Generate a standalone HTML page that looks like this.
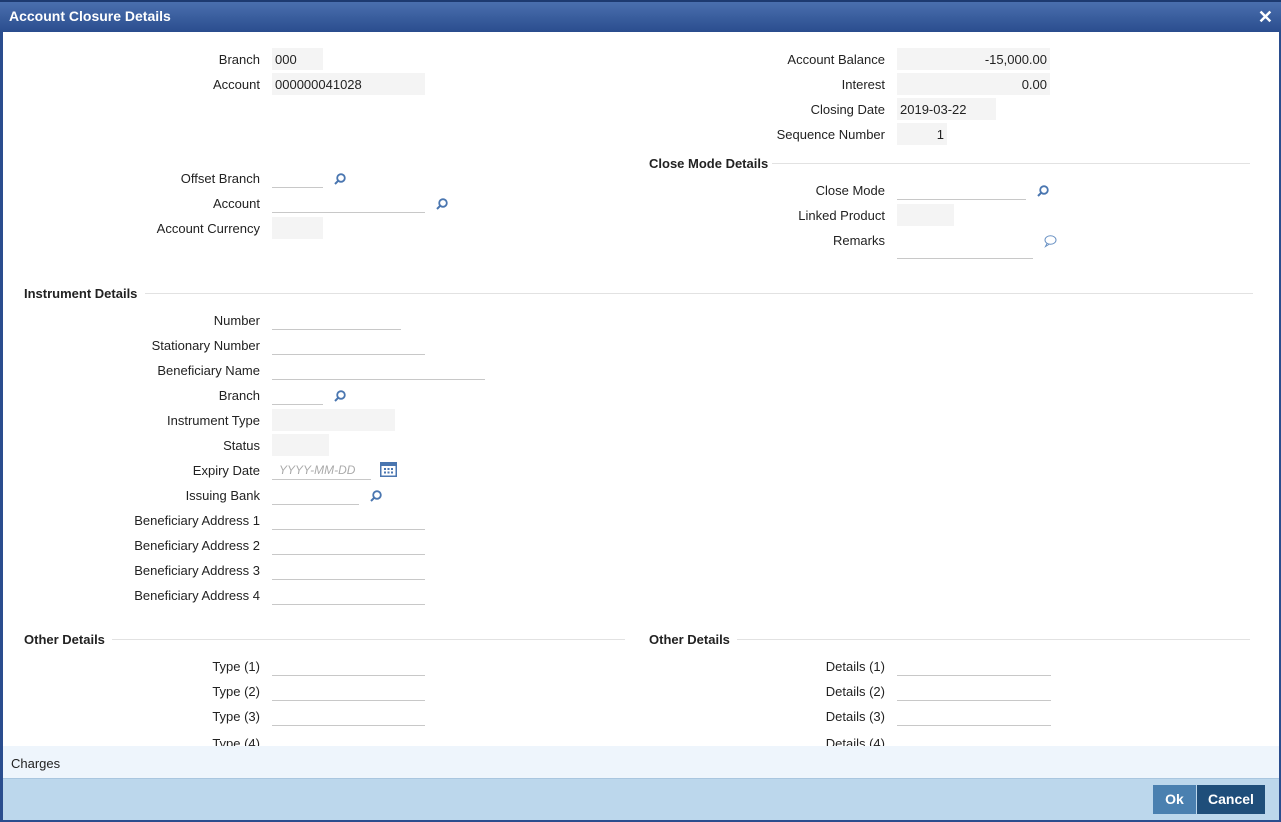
<!DOCTYPE html>
<html><head><meta charset="utf-8"><style>
*{margin:0;padding:0;box-sizing:border-box}
body{width:1281px;height:822px;overflow:hidden;background:#fff;font-family:"Liberation Sans",Arial,sans-serif;font-size:13px;color:#222;position:relative}
#title{position:absolute;left:0;top:0;width:1281px;height:32px;background:linear-gradient(#4a6fae,#2a4d8e);border-top:2px solid #1d3a70;color:#fff;font-size:14px;font-weight:bold;padding:6px 0 0 9px}
#x{position:absolute;right:8px;top:5px;font-size:18px;font-weight:bold}
#lb{position:absolute;left:0;top:32px;width:3px;height:790px;background:#2a4d8e}
#rb{position:absolute;right:0;top:32px;width:2px;height:790px;background:#2a4d8e}
#content{position:absolute;left:3px;top:32px;width:1276px;height:714px;overflow:hidden}
.l{position:absolute;text-align:right;width:250px;line-height:16px}
.f{position:absolute;height:22px;line-height:24px;padding:0 3px}
.g{background:#f4f4f4}
.u{border-bottom:1px solid #c8c8c8}
.h{position:absolute;font-weight:bold;line-height:16px}
.ln{position:absolute;height:1px;background:#e2e2e2}
.ic{position:absolute;width:14px;height:14px}
#charges{position:absolute;left:3px;top:746px;width:1276px;height:32px;background:#eef5fc;padding:10px 0 0 8px}
#bot{position:absolute;left:3px;top:778px;width:1276px;height:42px;background:#bcd7ec;border-top:1px solid #a9c6df}
#bbot{position:absolute;left:0;top:820px;width:1281px;height:2px;background:#2a4d8e}
.btn{position:absolute;top:6px;height:29px;color:#fff;font-weight:bold;font-size:14px;text-align:center;line-height:29px}
</style></head><body>
<div id="title">Account Closure Details<span id="x">✕</span></div>
<div id="lb"></div><div id="rb"></div>
<div id="content">
<div style="position:absolute;left:-3px;top:-31px;width:1281px;height:800px">

<div class="l" style="left:10px;top:51px">Branch</div><div class="f g" style="left:272px;top:47px;width:51px">000</div>
<div class="l" style="left:10px;top:76px">Account</div><div class="f g" style="left:272px;top:72px;width:153px">000000041028</div>

<div class="l" style="left:635px;top:51px">Account Balance</div><div class="f g" style="left:897px;top:47px;width:153px;text-align:right">-15,000.00</div>
<div class="l" style="left:635px;top:76px">Interest</div><div class="f g" style="left:897px;top:72px;width:153px;text-align:right">0.00</div>
<div class="l" style="left:635px;top:101px">Closing Date</div><div class="f g" style="left:897px;top:97px;width:99px">2019-03-22</div>
<div class="l" style="left:635px;top:126px">Sequence Number</div><div class="f g" style="left:897px;top:122px;width:50px;text-align:right">1</div>

<div class="h" style="left:649px;top:155px">Close Mode Details</div><div class="ln" style="left:772px;top:162px;width:478px"></div>

<div class="l" style="left:10px;top:170px">Offset Branch</div><div class="f u" style="left:272px;top:165px;width:51px"></div>
<div class="l" style="left:10px;top:195px">Account</div><div class="f u" style="left:272px;top:190px;width:153px"></div>
<div class="l" style="left:10px;top:220px">Account Currency</div><div class="f g" style="left:272px;top:216px;width:51px"></div>

<div class="l" style="left:635px;top:182px">Close Mode</div><div class="f u" style="left:897px;top:177px;width:129px"></div>
<div class="l" style="left:635px;top:207px">Linked Product</div><div class="f g" style="left:897px;top:203px;width:57px"></div>
<div class="l" style="left:635px;top:232px">Remarks</div><div class="f u" style="left:897px;top:227px;width:136px;height:31px"></div>

<div class="h" style="left:24px;top:285px">Instrument Details</div><div class="ln" style="left:145px;top:292px;width:1108px"></div>

<div class="l" style="left:10px;top:312px">Number</div><div class="f u" style="left:272px;top:307px;width:129px"></div>
<div class="l" style="left:10px;top:337px">Stationary Number</div><div class="f u" style="left:272px;top:332px;width:153px"></div>
<div class="l" style="left:10px;top:362px">Beneficiary Name</div><div class="f u" style="left:272px;top:357px;width:213px"></div>
<div class="l" style="left:10px;top:387px">Branch</div><div class="f u" style="left:272px;top:382px;width:51px"></div>
<div class="l" style="left:10px;top:412px">Instrument Type</div><div class="f g" style="left:272px;top:408px;width:123px"></div>
<div class="l" style="left:10px;top:437px">Status</div><div class="f g" style="left:272px;top:433px;width:57px"></div>
<div class="l" style="left:10px;top:462px">Expiry Date</div><div class="f u" style="left:272px;top:457px;width:99px;color:#aaa;font-style:italic;font-size:12px;padding-left:7px">YYYY-MM-DD</div>
<div class="l" style="left:10px;top:487px">Issuing Bank</div><div class="f u" style="left:272px;top:482px;width:87px"></div>
<div class="l" style="left:10px;top:512px">Beneficiary Address 1</div><div class="f u" style="left:272px;top:507px;width:153px"></div>
<div class="l" style="left:10px;top:537px">Beneficiary Address 2</div><div class="f u" style="left:272px;top:532px;width:153px"></div>
<div class="l" style="left:10px;top:562px">Beneficiary Address 3</div><div class="f u" style="left:272px;top:557px;width:153px"></div>
<div class="l" style="left:10px;top:587px">Beneficiary Address 4</div><div class="f u" style="left:272px;top:582px;width:153px"></div>

<div class="h" style="left:24px;top:631px">Other Details</div><div class="ln" style="left:112px;top:638px;width:513px"></div>
<div class="h" style="left:649px;top:631px">Other Details</div><div class="ln" style="left:737px;top:638px;width:513px"></div>

<div class="l" style="left:10px;top:658px">Type (1)</div><div class="f u" style="left:272px;top:653px;width:153px"></div>
<div class="l" style="left:10px;top:683px">Type (2)</div><div class="f u" style="left:272px;top:678px;width:153px"></div>
<div class="l" style="left:10px;top:708px">Type (3)</div><div class="f u" style="left:272px;top:703px;width:153px"></div>
<div class="l" style="left:10px;top:735px">Type (4)</div><div class="f u" style="left:272px;top:728px;width:153px"></div>
<div class="l" style="left:635px;top:658px">Details (1)</div><div class="f u" style="left:897px;top:653px;width:154px"></div>
<div class="l" style="left:635px;top:683px">Details (2)</div><div class="f u" style="left:897px;top:678px;width:154px"></div>
<div class="l" style="left:635px;top:708px">Details (3)</div><div class="f u" style="left:897px;top:703px;width:154px"></div>
<div class="l" style="left:635px;top:735px">Details (4)</div><div class="f u" style="left:897px;top:728px;width:154px"></div>

<svg class="ic" style="left:333px;top:171px" viewBox="0 0 14 14"><circle cx="8" cy="6" r="3.8" fill="none" stroke="#4a76b0" stroke-width="1.8"/><line x1="5.3" y1="8.7" x2="2" y2="12" stroke="#4a76b0" stroke-width="2"/></svg>
<svg class="ic" style="left:435px;top:196px" viewBox="0 0 14 14"><circle cx="8" cy="6" r="3.8" fill="none" stroke="#4a76b0" stroke-width="1.8"/><line x1="5.3" y1="8.7" x2="2" y2="12" stroke="#4a76b0" stroke-width="2"/></svg>
<svg class="ic" style="left:1036px;top:183px" viewBox="0 0 14 14"><circle cx="8" cy="6" r="3.8" fill="none" stroke="#4a76b0" stroke-width="1.8"/><line x1="5.3" y1="8.7" x2="2" y2="12" stroke="#4a76b0" stroke-width="2"/></svg>
<svg class="ic" style="left:333px;top:388px" viewBox="0 0 14 14"><circle cx="8" cy="6" r="3.8" fill="none" stroke="#4a76b0" stroke-width="1.8"/><line x1="5.3" y1="8.7" x2="2" y2="12" stroke="#4a76b0" stroke-width="2"/></svg>
<svg class="ic" style="left:369px;top:488px" viewBox="0 0 14 14"><circle cx="8" cy="6" r="3.8" fill="none" stroke="#4a76b0" stroke-width="1.8"/><line x1="5.3" y1="8.7" x2="2" y2="12" stroke="#4a76b0" stroke-width="2"/></svg>
<svg class="ic" style="left:1043px;top:233px" viewBox="0 0 14 14"><ellipse cx="7.5" cy="6" rx="5.5" ry="4.2" fill="none" stroke="#6a92c4" stroke-width="1"/><path d="M4 9.5 L2.5 12.5 L6.5 10" fill="none" stroke="#6a92c4" stroke-width="1"/></svg>
<svg style="position:absolute;left:380px;top:461px" width="17" height="15" viewBox="0 0 17 15"><rect x="0" y="0" width="17" height="15" fill="#4a76b0"/><rect x="1.5" y="4" width="14" height="9.5" fill="#fff"/><g fill="#4a76b0"><rect x="4" y="6" width="2" height="2"/><rect x="7.5" y="6" width="2" height="2"/><rect x="11" y="6" width="2" height="2"/><rect x="4" y="9.5" width="2" height="2"/><rect x="7.5" y="9.5" width="2" height="2"/><rect x="11" y="9.5" width="2" height="2"/></g></svg>
</div>
</div>
<div id="charges">Charges</div>
<div id="bot">
<div class="btn" style="left:1150px;width:43px;background:#4a80b0">Ok</div>
<div class="btn" style="left:1194px;width:68px;background:#1f4e7a">Cancel</div>
</div>
<div id="bbot"></div>
</body></html>
